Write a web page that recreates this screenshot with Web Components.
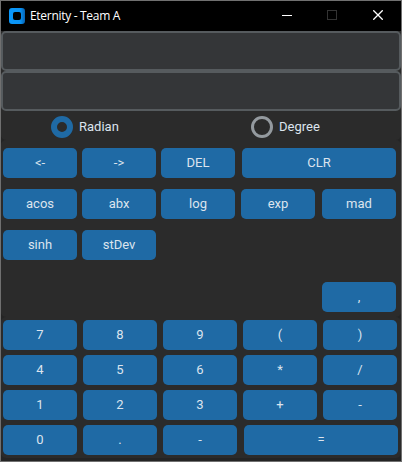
<!DOCTYPE html>
<html lang="en">
<head>
<meta charset="utf-8">
<title>Eternity - Team A</title>
<style>
html, body { margin: 0; width: 402px; height: 462px; overflow: hidden; background: #242424; }
</style>
</head>
<body>
<eternity-app></eternity-app>
<script>
class Base extends HTMLElement {
  connectedCallback() {
    if (this.shadowRoot) return;
    const t = document.createElement('template');
    t.innerHTML = this.render();
    this.attachShadow({ mode: 'open' }).append(t.content.cloneNode(true));
  }
}

customElements.define('title-bar', class extends Base {
  render() {
    return `<style>
      :host { display: flex; align-items: center; height: 30px; background: #000; color: #fff; font: 12px/16px "Open Sans", "Noto Sans", sans-serif; }
      .logo { margin-left: 8px; display: block; }
      .name { margin-left: 5px; flex: 1; white-space: nowrap; letter-spacing: -0.3px; }
      .controls { display: grid; grid-template-columns: repeat(3, 46px); width: 138px; height: 28px; margin-bottom: 2px; place-items: center; }
      .controls svg { display: block; }
    </style>
    <svg class="logo" width="16" height="16" viewBox="0 0 16 16">
      <defs><linearGradient id="g"><stop offset="0" stop-color="#0a97fa"/><stop offset=".7" stop-color="#0a93f4"/><stop offset="1" stop-color="#0562b2"/></linearGradient></defs>
      <path fill="url(#g)" fill-rule="evenodd" d="M3 0H13Q16 0 16 3V13Q16 16 13 16H3Q0 16 0 13V3Q0 0 3 0ZM6 4Q4 4 4 6V10Q4 12 6 12H10Q12 12 12 10V6Q12 4 10 4Z"/>
    </svg>
    <span class="name"><slot></slot></span>
    <span class="controls">
      <svg width="12" height="10"><path d="M2 5.5H12" stroke="#fff"/></svg>
      <svg width="10" height="10"><rect x=".5" y=".5" width="9" height="9" fill="none" stroke="#333"/></svg>
      <svg width="10" height="10"><path d="M.3 .3L9.7 9.7M9.7 .3L.3 9.7" stroke="#fff" stroke-width="1.3"/></svg>
    </span>`;
  }
});

customElements.define('text-entry', class extends Base {
  render() {
    return `<style>
      :host { display: block; height: 40px; background: #2b2b2b; }
      div { box-sizing: border-box; height: 40px; border: 2px solid #565b5e; border-radius: 5px; background: #343638; }
    </style><div></div>`;
  }
});

customElements.define('radio-option', class extends Base {
  render() {
    return `<style>
      :host { display: flex; align-items: center; gap: 6px; color: #dce4ee; font: 13px/22px Roboto, sans-serif; }
      i { box-sizing: border-box; width: 22px; height: 22px; border-radius: 50%; border: 3px solid #949a9f; }
      :host([checked]) i { border: 6px solid #1f6aa5; }
    </style><i></i><span><slot></slot></span>`;
  }
});

customElements.define('calc-key', class extends Base {
  render() {
    return `<style>
      :host { display: block; box-sizing: border-box; width: 74px; height: 30px; border-radius: 5px; background: #1f6aa5; color: #dce4ee; font: 13px/30px Roboto, sans-serif; text-align: center; }
      :host([wide]) { width: 154px; }
    </style><slot></slot>`;
  }
});

customElements.define('key-row', class extends Base {
  render() {
    return `<style>
      :host { display: flex; height: 30px; gap: var(--gap, 5px); }
    </style><slot></slot>`;
  }
});

customElements.define('key-panel', class extends Base {
  render() {
    return `<style>
      :host { display: flex; flex-direction: column; box-sizing: border-box; background: #2b2b2b; border-radius: 5px; }
    </style><slot></slot>`;
  }
});

customElements.define('eternity-app', class extends Base {
  render() {
    const keys = s => s.split(' ').map(k => `<calc-key>${k}</calc-key>`).join('');
    return `<style>
      :host { display: flex; flex-direction: column; box-sizing: border-box; width: 402px; height: 462px; border: 1px solid #707070; background: #242424; }
      .modes { display: grid; grid-template-columns: 200px 150px; height: 29px; padding: 5px 0 0 50px; box-sizing: border-box; align-items: start; background: #2b2b2b; border-radius: 0 0 5px 5px; }
      .functions { height: 177px; padding: 8px 5px 5px 2px; gap: 11px; }
      .numbers { height: 141px; padding: 3px 2px; gap: 5px; }
      .numbers key-row { --gap: 6px; }
      .clear, .mad { margin-left: 2px; }
      .exp, .equals { margin-left: 1px; }
      .comma { margin: 11px 0 0 auto; }
    </style>
    <title-bar>Eternity - Team A</title-bar>
    <text-entry></text-entry>
    <text-entry></text-entry>
    <div class="modes"><radio-option checked>Radian</radio-option><radio-option>Degree</radio-option></div>
    <key-panel class="functions">
      <key-row>${keys('&lt;- -&gt; DEL')}<calc-key class="clear" wide>CLR</calc-key></key-row>
      <key-row>${keys('acos abx log')}<calc-key class="exp">exp</calc-key><calc-key class="mad">mad</calc-key></key-row>
      <key-row>${keys('sinh stDev')}</key-row>
      <key-row class="comma"><calc-key>,</calc-key></key-row>
    </key-panel>
    <key-panel class="numbers">
      <key-row>${keys('7 8 9 ( )')}</key-row>
      <key-row>${keys('4 5 6 * /')}</key-row>
      <key-row>${keys('1 2 3 + -')}</key-row>
      <key-row>${keys('0 . -')}<calc-key class="equals" wide>=</calc-key></key-row>
    </key-panel>`;
  }
});
</script>
</body>
</html>
